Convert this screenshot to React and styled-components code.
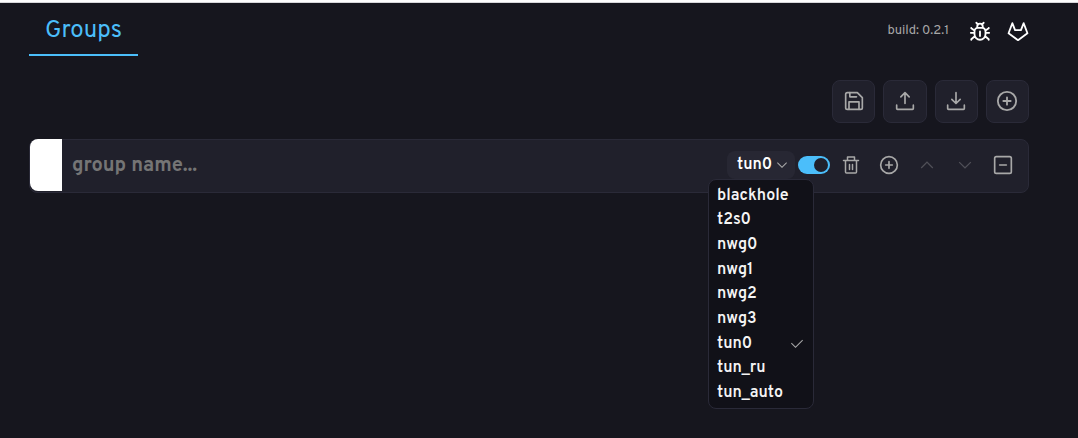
import React, { useState } from "react";
import styled, { createGlobalStyle } from "styled-components";

const GlobalStyle = createGlobalStyle`
  *, *::before, *::after { box-sizing: border-box; }
  body {
    margin: 0;
    background: #16161e;
    color: #fff;
    font-family: Overpass, Roboto, "Liberation Sans", sans-serif;
    font-size: 16px;
  }
  button, input { font: inherit; }
`;

const Page = styled.div`
  min-height: 100vh;
  border-top: 2px solid #fcfcfd;
`;

const Container = styled.main`
  padding: 0 49px 0 29px;
  border-top: 1px solid #d6d6da;
`;

const Header = styled.header`
  display: flex;
  align-items: center;
  justify-content: space-between;
`;

const Tab = styled.button`
  height: 53px;
  padding: 4px 16px 0;
  border: 0;
  border-bottom: 2px solid #4bbefa;
  background: none;
  color: #4bbefa;
  font-size: 24px;
  line-height: 48px;
`;

const Meta = styled.div`
  display: flex;
  align-items: center;
  gap: 16px;
  padding-top: 2px;
`;

const Version = styled.span`
  margin-right: 4px;
  color: #a8a8a8;
  font-size: 13px;
`;

const MetaLink = styled.a`
  display: flex;
  color: #fff;
`;

const Toolbar = styled.div`
  display: grid;
  grid-template-columns: repeat(4, 1fr);
  gap: 8px;
  width: 197px;
  margin: 24px 0 16px auto;
`;

const ToolButton = styled.button`
  display: grid;
  place-items: center;
  height: 43px;
  padding: 0 0 1px;
  border: 1px solid #2a2a38;
  border-radius: 8px;
  background: #20202b;
  color: #a8a8a8;
`;

const Group = styled.section`
  display: flex;
  align-items: center;
  height: 54px;
  padding: 0 6px 2px 0;
  border: 1px solid #2a2a38;
  border-radius: 8px;
  background: #20202b;
`;

const ColorSwatch = styled.button`
  align-self: stretch;
  width: 32px;
  margin: -1px 0;
  padding: 0;
  border: 0;
  border-radius: 8px 0 0 8px;
  background: #fff;
`;

const NameInput = styled.input`
  flex: 1;
  min-width: 0;
  padding: 2px 10px 0;
  border: 0;
  outline: 0;
  background: none;
  color: #fff;
  font-size: 20px;
  font-weight: 700;
  &::placeholder { color: #757575; opacity: 1; }
`;

const Picker = styled.div`
  position: relative;
  margin-right: 3px;
`;

const PickerButton = styled.button`
  display: flex;
  align-items: center;
  justify-content: space-between;
  width: 68px;
  height: 28px;
  padding: 0 5px 0 10px;
  border: 0;
  border-radius: 8px;
  background: #272733;
  color: #fff;
  font-weight: 600;
  svg { color: #a8a8a8; }
`;

const Menu = styled.ul`
  position: absolute;
  top: 28px;
  right: -19px;
  z-index: 1;
  display: grid;
  grid-auto-rows: 1fr;
  width: 106px;
  height: 230px;
  margin: 0;
  padding: 4px 0 2px;
  border: 1px solid #2a2a38;
  border-radius: 8px;
  background: #111118;
  list-style: none;
`;

const Option = styled.button`
  display: flex;
  align-items: center;
  justify-content: space-between;
  width: 100%;
  height: 100%;
  padding: 0 8px;
  border: 0;
  background: none;
  color: #f5f5f5;
  font-weight: 600;
  line-height: 19px;
  svg { color: #a8a8a8; }
`;

const Switch = styled.input`
  appearance: none;
  display: flex;
  align-items: center;
  width: 32px;
  height: 18px;
  margin: 0 2px 0 0;
  padding: 0 2px;
  border-radius: 9px;
  background: #4bbefa;
  &::before {
    content: "";
    width: 14px;
    height: 14px;
    margin-left: auto;
    border-radius: 50%;
    background: #20202b;
  }
  &:not(:checked) { background: #4a4a58; }
  &:not(:checked)::before { margin-left: 0; }
`;

const IconButton = styled.button`
  display: grid;
  place-items: center;
  width: 38px;
  height: 38px;
  padding: 0;
  border: 0;
  background: none;
  color: #a8a8a8;
  &:disabled { color: #505058; }
`;

const Icon = ({ size = 20, box = 24, stroke = 2, children }) => (
  <svg width={size} height={size} viewBox={`0 0 ${box} ${box}`} fill="none" stroke="currentColor"
    strokeWidth={stroke} strokeLinecap="round" strokeLinejoin="round" aria-hidden="true">
    {children}
  </svg>
);

const SaveIcon = () => (
  <Icon>
    <path d="M4 2h12l6 6v12a2 2 0 0 1-2 2H4a2 2 0 0 1-2-2V4a2 2 0 0 1 2-2z" />
    <path d="M7 2v5h8M6 22v-9h12v9" />
  </Icon>
);
const UploadIcon = () => (
  <Icon><path d="M12 15V2M7 7l5-5 5 5M2 17v4a1 1 0 0 0 1 1h18a1 1 0 0 0 1-1v-4" /></Icon>
);
const DownloadIcon = () => (
  <Icon><path d="M12 2v13M7 10l5 5 5-5M2 17v4a1 1 0 0 0 1 1h18a1 1 0 0 0 1-1v-4" /></Icon>
);
const TrashIcon = () => (
  <Icon box={20} stroke={1.5}>
    <path d="M2.500 5.500h15M4.500 5.500V17a1 1 0 0 0 1 1h9a1 1 0 0 0 1-1V5.500M6.500 5.500v-3.500h7v3.500M8.500 9.500v5M11.500 9.500v5" />
  </Icon>
);

const carbon = (d) => ({ size = 20 }) => (
  <svg width={size} height={size} viewBox="0 0 32 32" fill="currentColor" aria-hidden="true"><path d={d} /></svg>
);
const ChevronUp = carbon("M16 10 26 20l-1.400 1.400L16 12.800l-8.600 8.600L6 20z");
const ChevronDown = carbon("M16 22 6 12l1.400-1.400 8.600 8.600 8.600-8.600L26 12z");
const CheckIcon = carbon("M13 24 4 15l1.400-1.400L13 21.200 26.600 7.600 28 9z");

const AddCircleIcon = ({ size }) => (
  <Icon size={size}><circle cx="12" cy="12" r="10" /><path d="M12 8v8M8 12h8" /></Icon>
);
const CollapseIcon = () => (
  <Icon><rect x="2" y="2" width="20" height="20" rx="2" /><path d="M8 12h8" /></Icon>
);
const BugIcon = () => (
  <Icon size={22}>
    <path d="M6 12.500a3.500 4 0 0 1 3.500-4h5a3.500 4 0 0 1 3.500 4v3a6 6 0 0 1-12 0zM9 8V7a3 3 0 0 1 6 0v1M12 12.500v5M8 3l2 2M16 3l-2 2M2 14h4M18 14h4M2.500 8.500v.5L6 11.500M21.500 8.500v.5L18 11.500M2.500 21.500V21L6 18M21.500 21.500V21L18 18" />
  </Icon>
);
const GitlabIcon = () => (
  <Icon size={22}><path d="M12 22 1.700 14.500 5.800 3.500l3 7.500h6.400l3-7.500 4.100 11z" /></Icon>
);

const interfaces = ["blackhole", "t2s0", "nwg0", "nwg1", "nwg2", "nwg3", "tun0", "tun_ru", "tun_auto"];

export default function App() {
  const [selected, setSelected] = useState("tun0");
  const [open, setOpen] = useState(true);
  return (
    <>
      <GlobalStyle />
      <Page>
        <Container>
          <Header>
            <nav><Tab type="button">Groups</Tab></nav>
            <Meta>
              <Version>build: 0.2.1</Version>
              <MetaLink href="#bug" aria-label="Report a bug"><BugIcon /></MetaLink>
              <MetaLink href="#source" aria-label="Source code"><GitlabIcon /></MetaLink>
            </Meta>
          </Header>
          <Toolbar>
            <ToolButton type="button" aria-label="Save"><SaveIcon /></ToolButton>
            <ToolButton type="button" aria-label="Export"><UploadIcon /></ToolButton>
            <ToolButton type="button" aria-label="Import"><DownloadIcon /></ToolButton>
            <ToolButton type="button" aria-label="Add group"><AddCircleIcon size={22} /></ToolButton>
          </Toolbar>
          <Group>
            <ColorSwatch type="button" aria-label="Group color" />
            <NameInput placeholder="group name..." aria-label="Group name" />
            <Picker>
              <PickerButton type="button" aria-haspopup="listbox" aria-expanded={open} onClick={() => setOpen(!open)}>
                {selected}<ChevronDown size={16} />
              </PickerButton>
              {open && (
                <Menu role="listbox" aria-label="Interface">
                  {interfaces.map((name) => (
                    <li key={name} role="none">
                      <Option type="button" role="option" aria-selected={name === selected}
                        onClick={() => { setSelected(name); setOpen(false); }}>
                        {name}{name === selected && <CheckIcon size={16} />}
                      </Option>
                    </li>
                  ))}
                </Menu>
              )}
            </Picker>
            <Switch type="checkbox" role="switch" defaultChecked aria-label="Enabled" />
            <IconButton type="button" aria-label="Delete group"><TrashIcon /></IconButton>
            <IconButton type="button" aria-label="Add rule"><AddCircleIcon size={20} /></IconButton>
            <IconButton type="button" aria-label="Move up" disabled><ChevronUp /></IconButton>
            <IconButton type="button" aria-label="Move down" disabled><ChevronDown /></IconButton>
            <IconButton type="button" aria-label="Collapse"><CollapseIcon /></IconButton>
          </Group>
        </Container>
      </Page>
    </>
  );
}
